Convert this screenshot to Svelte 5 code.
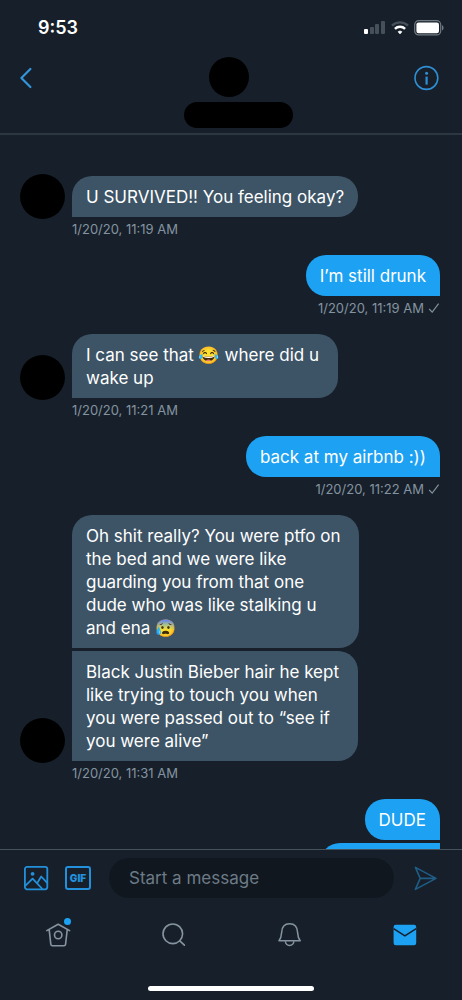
<script lang="ts">
  interface Group {
    mine: boolean
    bubbles: string[]
    time: string
  }

  const groups: Group[] = [
    { mine: false, bubbles: ['U SURVIVED!! You feeling okay?'], time: '1/20/20, 11:19 AM' },
    { mine: true, bubbles: ['I’m still drunk'], time: '1/20/20, 11:19 AM' },
    { mine: false, bubbles: ['I can see that 😂 where did u \nwake up'], time: '1/20/20, 11:21 AM' },
    { mine: true, bubbles: ['back at my airbnb :))'], time: '1/20/20, 11:22 AM' },
    {
      mine: false,
      bubbles: [
        'Oh shit really? You were ptfo on \nthe bed and we were like \nguarding you from that one \ndude who was like stalking u \nand ena 😰',
        'Black Justin Bieber hair he kept \nlike trying to touch you when \nyou were passed out to “see if \nyou were alive”',
      ],
      time: '1/20/20, 11:31 AM',
    },
    // the last bubble is still scrolled under the composer
    { mine: true, bubbles: ['DUDE', ''], time: '' },
  ]

  let draft = $state('')
</script>

<div class="app">
  <header>
    <div class="status">
      <span class="clock">9:53</span>
      <div class="indicators">
        <svg width="22" height="14" viewBox="0 0 22 14">
          <rect x="0" y="8" width="4" height="5" rx="1" fill="#fff" />
          <rect x="6" y="6" width="4" height="7" rx="1" fill="#46505a" />
          <rect x="11" y="3" width="4" height="10" rx="1" fill="#46505a" />
          <rect x="17" y="0" width="4" height="13" rx="1" fill="#46505a" />
        </svg>
        <svg width="18" height="14" viewBox="0 0 18 14" fill="none" stroke-width="2.4">
          <path d="M1 4.7a11.4 11.4 0 0 1 16 0" stroke="#46505a" />
          <path d="M3.9 7.8a7.3 7.3 0 0 1 10.2 0" stroke="#fff" />
          <path d="M7 10.8a3 3 0 0 1 4 0L9 13z" fill="#fff" stroke="#fff" stroke-width="0.6" />
        </svg>
        <svg width="30" height="16" viewBox="0 0 30 16">
          <rect x="0.7" y="0.7" width="26" height="14.2" rx="4" fill="none" stroke="#717a82" stroke-width="1.2" />
          <rect x="2.4" y="2.4" width="22.6" height="10.8" rx="2.2" fill="#fff" />
          <path d="M28 5.2c2 .6 2 4.6 0 5.2z" fill="#717a82" />
        </svg>
      </div>
    </div>
    <div class="nav">
      <button class="icon-button" aria-label="Back">
        <svg width="14" height="22" viewBox="0 0 14 22" fill="none" stroke="#3395dc" stroke-width="2.2" stroke-linecap="round" stroke-linejoin="round">
          <path d="M12.4 2 3.4 11 12.4 20" />
        </svg>
      </button>
      <div class="contact">
        <div class="contact-photo"></div>
        <div class="contact-name"></div>
      </div>
      <button class="icon-button end" aria-label="Info">
        <svg width="26" height="26" viewBox="0 0 26 26" fill="none" stroke="#2f8fd6" stroke-width="1.6">
          <circle cx="12.4" cy="13" r="11.4" />
          <path d="M12.6 11.6v8" stroke-width="2.2" />
          <circle cx="12.6" cy="8.2" r="1.5" fill="#2f8fd6" stroke="none" />
        </svg>
      </button>
    </div>
  </header>

  <main>
    {#each groups as group}
      <section class="group" class:mine={group.mine}>
        {#if !group.mine}
          <div class="avatar"></div>
        {/if}
        <div class="bubbles">
          {#each group.bubbles as text}
            <p class="bubble">{text}</p>
          {/each}
        </div>
        {#if group.time}
          <div class="meta">
            <time>{group.time}</time>
            {#if group.mine}
              <svg width="12" height="12" viewBox="0 0 12 12" fill="none" stroke="currentColor" stroke-width="1.1">
                <path d="M1.2 7 4.2 10.2 10.6 1.6" />
              </svg>
            {/if}
          </div>
        {/if}
      </section>
    {/each}
  </main>

  <footer>
    <form class="composer" onsubmit={(e) => e.preventDefault()}>
      <button type="button" class="tool" aria-label="Photo">
        <svg width="26" height="26" viewBox="0 0 26 26" fill="none" stroke="#2390dc" stroke-width="1.8" stroke-linejoin="round">
          <rect x="1.9" y="1.9" width="22.4" height="22.4" rx="2.2" />
          <circle cx="9.6" cy="8.8" r="1.9" fill="#2390dc" stroke="none" />
          <path d="M2.2 20.8 9.6 13.6 19.4 24M14 18.4 18.2 11.5 24.2 17.8" />
        </svg>
      </button>
      <button type="button" class="tool gif">GIF</button>
      <input type="text" aria-label="Message" placeholder="Start a message" bind:value={draft} />
      <button class="send" aria-label="Send">
        <svg width="24" height="26" viewBox="0 0 24 26" fill="none" stroke="#1f5c86" stroke-width="1.6" stroke-linejoin="round">
          <path d="M1.4 2.4 22 13.4 1.4 24.4 6.2 13.4zM6.2 13.4H21.6" />
        </svg>
      </button>
    </form>
    <nav class="tabs">
      <a href="#home" aria-label="Home">
        <svg width="26" height="26" viewBox="0 0 26 26" fill="none" stroke="currentColor" stroke-width="1.6" stroke-linecap="round" stroke-linejoin="round">
          <path d="M1.8 8.6 13.2 2.2 24.6 8.6M4.2 7.8 5.8 22.2Q6 23.8 7.4 23.8H19Q20.4 23.8 20.6 22.2L22.2 7.8" />
          <circle cx="13.2" cy="13" r="3.7" />
        </svg>
        <span class="dot"></span>
      </a>
      <a href="#search" aria-label="Search">
        <svg width="26" height="26" viewBox="0 0 26 26" fill="none" stroke="currentColor" stroke-width="1.6" stroke-linecap="round">
          <circle cx="12.8" cy="11.8" r="9.8" />
          <path d="M19.8 18.8 24.4 23.2" />
        </svg>
      </a>
      <a href="#notifications" aria-label="Notifications">
        <svg width="26" height="26" viewBox="0 0 26 26" fill="none" stroke="currentColor" stroke-width="1.5" stroke-linejoin="round">
          <path d="M3 18.8C5 16.2 5.4 14.2 5.6 10.6 5.8 5 9 1.8 13.6 1.8S21.4 5 21.6 10.6C21.8 14.2 22.2 16.2 24.2 18.8z" />
          <path d="M9.4 19.2a4.2 4.2 0 0 0 8.4 0" />
        </svg>
      </a>
      <a href="#messages" aria-label="Messages" class="active">
        <svg width="26" height="26" viewBox="0 0 26 26">
          <rect x="2.6" y="2.8" width="22.6" height="20.4" rx="2.2" fill="currentColor" />
          <path d="M2.6 6.6 13.9 13.8 25.2 6.6" fill="none" stroke="#17202a" stroke-width="1.5" />
        </svg>
      </a>
    </nav>
    <div class="home-bar"></div>
  </footer>
</div>

<style>
  :global(body) {
    margin: 0;
    background: #17202a;
  }

  .app {
    display: flex;
    flex-direction: column;
    height: 100vh;
    background: #17202a;
    color: #fff;
    font-family: Inter, 'Noto Color Emoji', sans-serif;
  }

  button {
    display: flex;
    align-items: center;
    padding: 0;
    border: none;
    background: none;
    cursor: pointer;
  }

  svg {
    display: block;
  }

  header {
    border-bottom: 2px solid #2d3741;
  }

  .status {
    display: flex;
    align-items: center;
    justify-content: space-between;
    height: 55px;
    padding: 0 18px 0 38px;
  }

  .clock {
    font-size: 18px;
    font-weight: 600;
  }

  .indicators {
    display: flex;
    align-items: center;
    gap: 5px;
  }

  .nav {
    display: grid;
    grid-template-columns: 1fr auto 1fr;
    padding: 2px 22px 5px 18px;
  }

  .icon-button {
    height: 42px;
  }

  .end {
    justify-self: end;
  }

  .contact {
    display: flex;
    flex-direction: column;
    align-items: center;
    gap: 5px;
  }

  .contact-photo {
    width: 40px;
    height: 40px;
    border-radius: 50%;
    background: #000;
  }

  .contact-name {
    width: 109px;
    height: 26px;
    margin-left: 18px;
    border-radius: 13px;
    background: #000;
  }

  main {
    flex: 1;
    min-height: 0;
    overflow: hidden;
    padding: 41px 22px 0 20px;
  }

  .group {
    display: grid;
    grid-template-columns: 45px 1fr;
    column-gap: 7px;
  }

  .group.mine {
    grid-template-columns: 1fr;
  }

  .avatar {
    align-self: end;
    width: 45px;
    height: 45px;
    margin: -2px 0;
    border-radius: 50%;
    background: #000;
  }

  .bubbles {
    display: flex;
    flex-direction: column;
    align-items: flex-start;
    gap: 3px;
  }

  .mine .bubbles {
    align-items: flex-end;
  }

  .bubble {
    box-sizing: border-box;
    min-height: 41px;
    margin: 0;
    padding: 10px 14px 8px;
    border-radius: 20px 20px 20px 0;
    background: #3d5466;
    font-size: 17px;
    line-height: 23px;
    white-space: pre;
  }

  .bubble + .bubble {
    border-top-left-radius: 0;
  }

  .mine .bubble {
    border-radius: 20px 20px 0 20px;
    background: #1da1f2;
  }

  .mine .bubble + .bubble {
    border-top-right-radius: 0;
  }

  .bubble:empty {
    width: 120px;
  }

  .meta {
    display: flex;
    grid-column: 2;
    gap: 4px;
    height: 34px;
    padding-top: 4px;
    color: #8493a0;
    font-size: 13px;
    line-height: 16px;
  }

  .mine .meta {
    grid-column: 1;
    justify-content: flex-end;
  }

  .meta svg {
    margin-top: 2px;
  }

  footer {
    border-top: 1px solid #46525d;
  }

  .composer {
    display: flex;
    align-items: center;
    padding: 8px 24px 0 23px;
  }

  .tool {
    margin-right: 16px;
  }

  .gif {
    box-sizing: border-box;
    justify-content: center;
    width: 26px;
    height: 24px;
    margin-right: 18px;
    border: 2px solid #2390dc;
    border-radius: 3px;
    color: #2390dc;
    font-family: Inter, sans-serif;
    font-size: 10px;
    font-weight: 900;
  }

  input {
    box-sizing: border-box;
    flex: 1;
    min-width: 0;
    height: 40px;
    margin-right: 20px;
    padding: 0 20px;
    border: none;
    border-radius: 20px;
    outline: none;
    background: #10171f;
    color: #fff;
    font-family: Inter, sans-serif;
    font-size: 17px;
  }

  input::placeholder {
    color: #6d7b87;
    opacity: 1;
  }

  .tabs {
    display: flex;
    height: 74px;
  }

  .tabs a {
    position: relative;
    display: flex;
    flex: 1;
    align-items: center;
    justify-content: center;
    color: #8594a0;
  }

  .tabs .active {
    color: #1da1f2;
  }

  .dot {
    position: absolute;
    top: 20px;
    left: calc(50% + 6px);
    width: 7px;
    height: 7px;
    border-radius: 50%;
    background: #1da1f2;
  }

  .home-bar {
    width: 36%;
    height: 5px;
    margin: 14px auto 9px;
    border-radius: 3px;
    background: #fff;
  }
</style>
